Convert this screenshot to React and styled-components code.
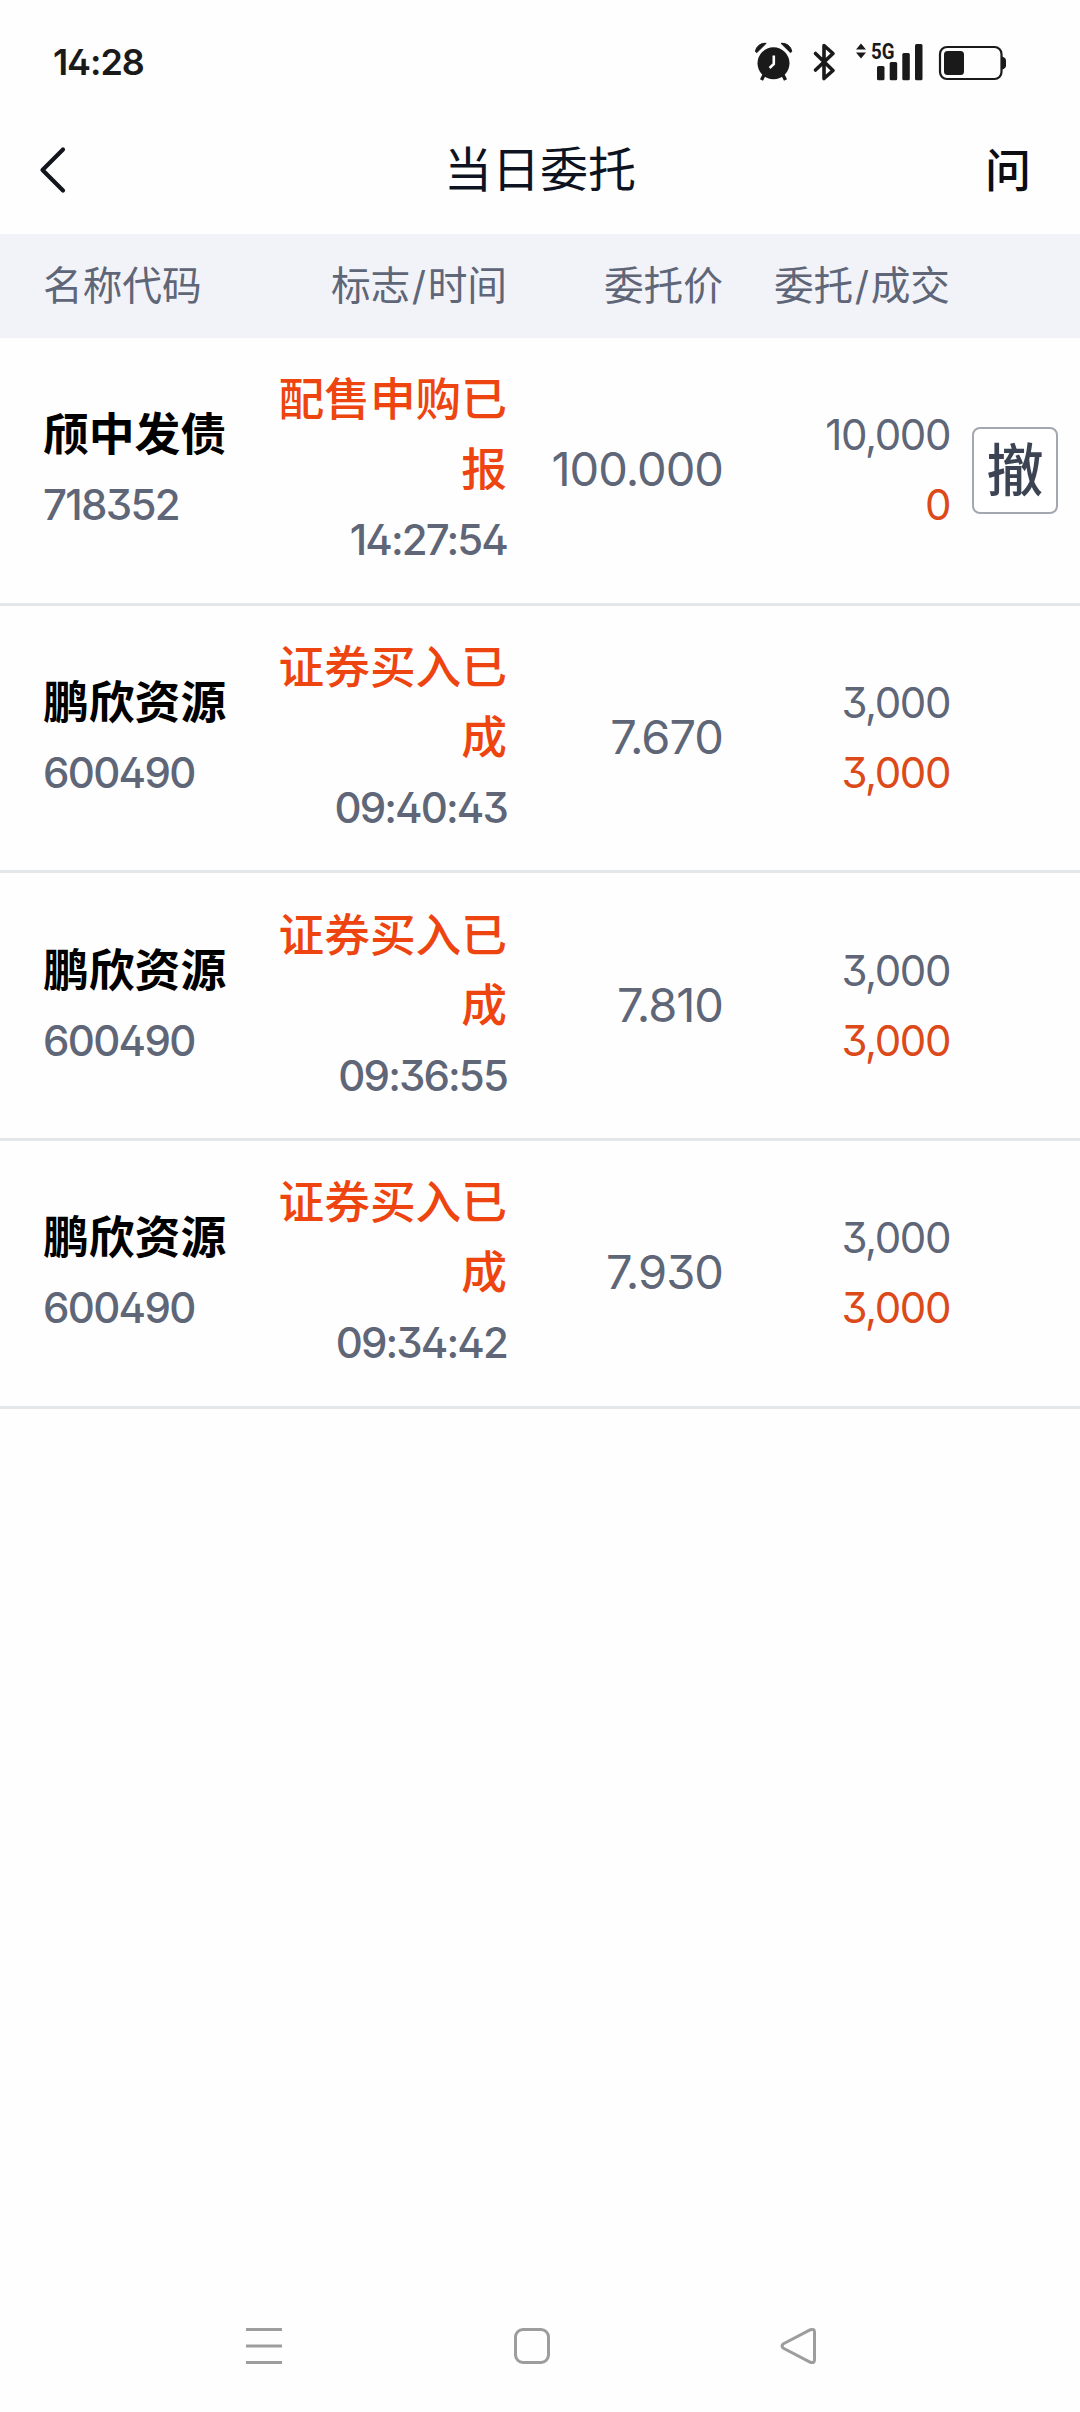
import React from "react";
import styled, { createGlobalStyle } from "styled-components";

const GlobalStyle = createGlobalStyle`
  *, *::before, *::after { box-sizing: border-box; }
  body {
    margin: 0;
    background: #fefefe;
    font-family: Inter, "Noto Sans CJK SC", sans-serif;
    font-feature-settings: "cv02", "cv09";
    color: #5f6677;
  }
`;

const Screen = styled.div`
  display: flex;
  flex-direction: column;
  width: 1080px;
  height: 2412px;
  background: #fefefe;
`;

const StatusBar = styled.header`
  display: flex;
  align-items: center;
  justify-content: space-between;
  height: 124px;
  padding: 0 73px 0 53px;
`;

const Clock = styled.span`
  font-size: 36px;
  font-weight: 600;
  letter-spacing: -1.1px;
  color: #1a1a1a;
`;

const StatusIcons = styled.svg`
  display: block;
  width: 254px;
  height: 44px;
`;

const NavBar = styled.nav`
  display: grid;
  grid-template-columns: 120px 1fr 120px;
  align-items: center;
  height: 110px;
  padding-bottom: 18px;
  color: #0d1320;
`;

const NavButton = styled.button`
  display: flex;
  justify-content: ${(p) => (p.$end ? "flex-end" : "flex-start")};
  padding: ${(p) => (p.$end ? "0 49px 6px 0" : "0 0 0 36px")};
  border: 0;
  background: none;
  font: 500 46px/60px "Noto Sans CJK SC", sans-serif;
  color: #0b0d12;
`;

const Title = styled.h1`
  margin: 0;
  text-align: center;
  font-size: 48px;
  font-weight: 400;
  line-height: 70px;
`;

const columns = `
  display: grid;
  grid-template-columns: 227px 237px 216px 227px 108px;
  align-items: center;
  padding-left: 43px;
`;

const TableHead = styled.div`
  ${columns}
  flex: none;
  height: 104px;
  background: #f2f3f8;
  font-size: 39.7px;
  line-height: 58px;
`;

const HeadCell = styled.span`
  text-align: ${(p) => (p.$left ? "left" : "right")};
  white-space: nowrap;
`;

const Slash = styled.span`
  margin: 0 1.5px;
`;

const Row = styled.div`
  ${columns}
  flex: none;
  height: 267.7px;
  border-bottom: 3px solid #e4e7ea;
`;

const Cell = styled.div`
  display: flex;
  flex-direction: column;
  align-items: ${(p) => (p.$left ? "flex-start" : "flex-end")};
  padding-bottom: ${(p) => p.$lift || 0}px;
  line-height: 70px;
`;

const Name = styled.strong`
  font-size: 45.8px;
  font-weight: 700;
  color: #000;
`;

const Code = styled.span`
  font-size: 42px;
  font-weight: 500;
  letter-spacing: -1.7px;
`;

const Time = styled(Code)`
  letter-spacing: -1.9px;
`;

const Flag = styled.span`
  width: 231px;
  text-align: right;
  font-size: 45.7px;
  font-weight: 500;
  color: #ee440f;
`;

const Price = styled.span`
  font-size: 47px;
  letter-spacing: -1px;
`;

const Quantity = styled.span`
  font-size: 42px;
  letter-spacing: -1.4px;
  color: ${(p) => (p.$filled ? "#dc4a1a" : "inherit")};
`;

const CancelButton = styled.button`
  display: flex;
  align-items: center;
  justify-content: center;
  width: 86px;
  height: 87px;
  margin-left: 22px;
  padding: 0 0 8px;
  border: 2px solid #a3a7b1;
  border-radius: 8px;
  background: #fff;
  font: 500 57px/76px "Noto Sans CJK SC", sans-serif;
  color: #3c4353;
`;

const SystemBar = styled.footer`
  display: grid;
  grid-template-columns: 36px 36px 36px;
  column-gap: 232px;
  height: 84px;
  margin-top: auto;
  padding-left: 246px;
`;

const SystemIcon = styled.svg`
  width: 36px;
  height: 36px;
  overflow: visible;
  fill: none;
  stroke: #9d9d9d;
  stroke-width: 3;
`;

const orders = [
  { name: "颀中发债", code: "718352", flag: "配售申购已报", time: "14:27:54", price: "100.000", qty: "10,000", done: "0", cancel: true },
  { name: "鹏欣资源", code: "600490", flag: "证券买入已成", time: "09:40:43", price: "7.670", qty: "3,000", done: "3,000" },
  { name: "鹏欣资源", code: "600490", flag: "证券买入已成", time: "09:36:55", price: "7.810", qty: "3,000", done: "3,000" },
  { name: "鹏欣资源", code: "600490", flag: "证券买入已成", time: "09:34:42", price: "7.930", qty: "3,000", done: "3,000" },
];

function DeviceStatus() {
  return (
    <StatusIcons viewBox="753 40 254 44" fill="#1a1a1a">
      {/* alarm */}
      <circle cx="773.5" cy="63.3" r="16" />
      <path d="M755.4 51.5a9.5 9.5 0 0 1 10.8-8.2l-9.4 9.3zM791.8 51.5a9.5 9.5 0 0 0-10.8-8.2l9.4 9.3z" stroke="#1a1a1a" strokeLinejoin="round" />
      <path d="M764.5 74l-3 6M782.5 74l3 6" stroke="#1a1a1a" strokeWidth="3.4" />
      <path d="M773.8 55.5v8.5l-4.2 4" fill="none" stroke="#fff" strokeWidth="2.6" />
      {/* bluetooth */}
      <path d="M815.5 53.5L833 70.5L824 78.5V45.5L833 53.5L815.5 70" fill="none" stroke="#1a1a1a" strokeWidth="3.6" strokeLinejoin="round" strokeLinecap="round" />
      {/* mobile data */}
      <path d="M856 49.5l5-6 5 6zM856 52.5h10l-5 6z" />
      <text x="871" y="59" fontFamily="Roboto, sans-serif" fontWeight="700" fontSize="22" textLength="23.5" lengthAdjust="spacingAndGlyphs">5G</text>
      <rect x="877" y="66" width="7.5" height="14.3" rx="1.5" />
      <rect x="889.7" y="62" width="7.5" height="18.3" rx="1.5" />
      <rect x="902.3" y="53" width="7.5" height="27.3" rx="1.5" />
      <rect x="915" y="44" width="7.5" height="36.3" rx="1.5" />
      {/* battery */}
      <rect x="940" y="47" width="61.5" height="32" rx="7" fill="none" stroke="#1a1a1a" strokeWidth="2.2" />
      <rect x="944" y="51" width="20" height="24" rx="3.5" />
      <path d="M1002 56.5q4 1 4 4v5q0 3-4 4z" />
    </StatusIcons>
  );
}

export default function App() {
  return (
    <>
      <GlobalStyle />
      <Screen>
        <StatusBar>
          <Clock>14:28</Clock>
          <DeviceStatus />
        </StatusBar>
        <NavBar>
          <NavButton aria-label="返回">
            <svg width="32" height="48" viewBox="36 146 32 48" fill="none" stroke="#12151c" strokeWidth="4.2" strokeLinecap="round" strokeLinejoin="round">
              <path d="M63 149.5L42.5 170L63 190.5" />
            </svg>
          </NavButton>
          <Title>当日委托</Title>
          <NavButton $end>问</NavButton>
        </NavBar>
        <TableHead>
          <HeadCell $left>名称代码</HeadCell>
          <HeadCell>标志<Slash>/</Slash>时间</HeadCell>
          <HeadCell>委托价</HeadCell>
          <HeadCell>委托<Slash>/</Slash>成交</HeadCell>
        </TableHead>
        {orders.map((o) => (
          <Row key={o.time}>
            <Cell $left>
              <Name>{o.name}</Name>
              <Code>{o.code}</Code>
            </Cell>
            <Cell>
              <Flag>{o.flag}</Flag>
              <Time>{o.time}</Time>
            </Cell>
            <Cell $lift={2}>
              <Price>{o.price}</Price>
            </Cell>
            <Cell>
              <Quantity>{o.qty}</Quantity>
              <Quantity $filled>{o.done}</Quantity>
            </Cell>
            {o.cancel && <CancelButton>撤</CancelButton>}
          </Row>
        ))}
        <SystemBar>
          <SystemIcon viewBox="0 0 36 36">
            <path d="M0 1.5H36M0 18H36M0 34.5H36" />
          </SystemIcon>
          <SystemIcon viewBox="0 0 36 36">
            <rect x="1.5" y="1.5" width="33" height="33" rx="7.5" />
          </SystemIcon>
          <SystemIcon viewBox="1.5 0 36 36">
            <path d="M2.5 16L30 1.7Q34 0.5 34 4V32Q34 35.5 30 34.3L2.5 20Q0.5 18 2.5 16Z" strokeLinejoin="round" />
          </SystemIcon>
        </SystemBar>
      </Screen>
    </>
  );
}
